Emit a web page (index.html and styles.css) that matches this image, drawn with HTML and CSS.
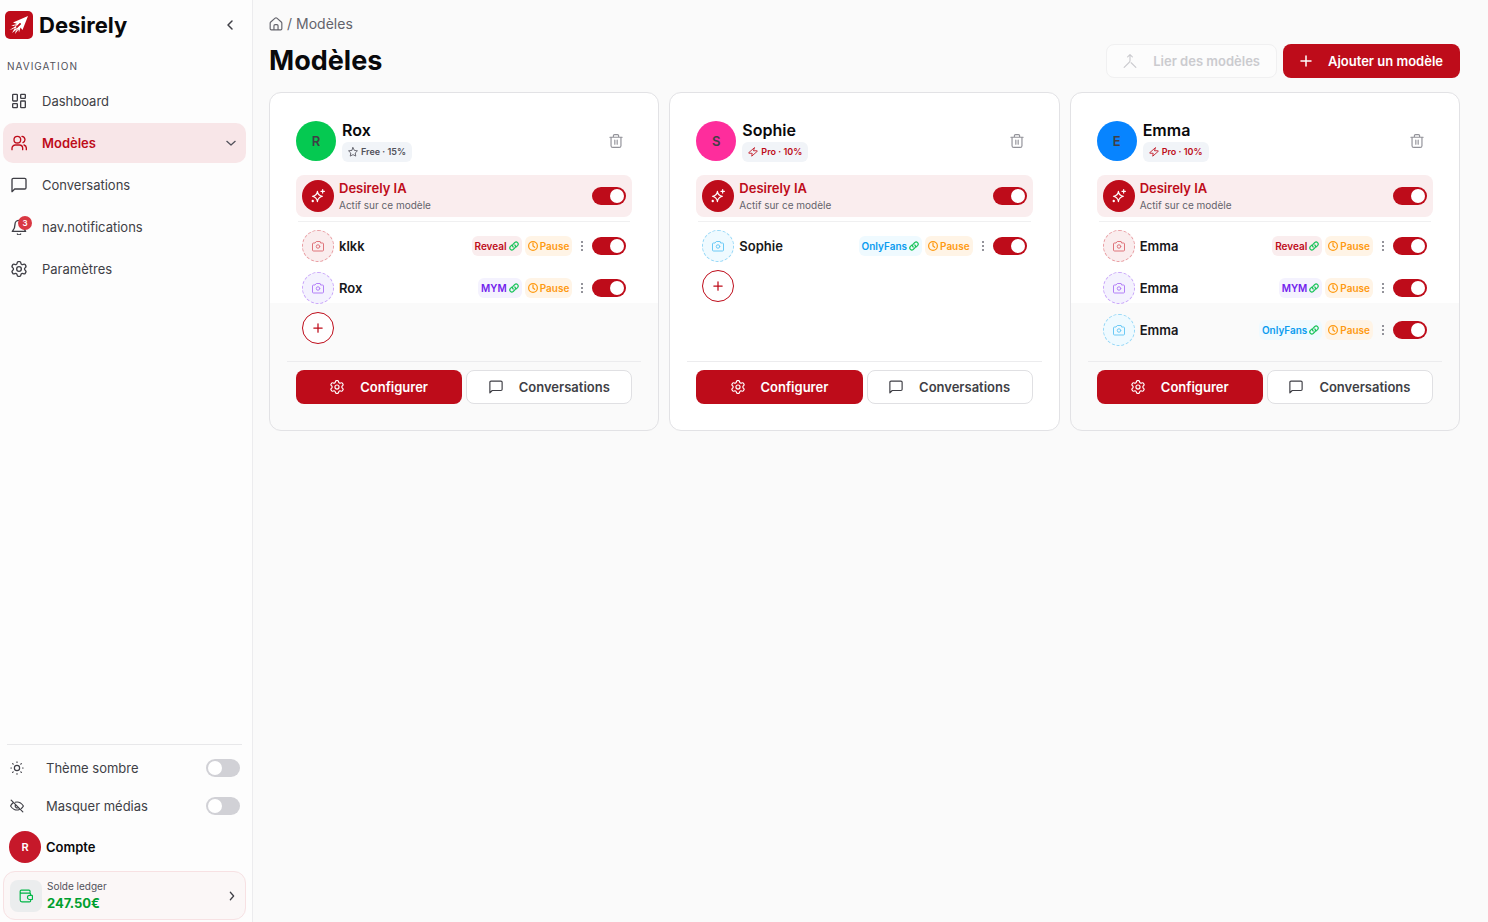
FILE: index.html
```html
<!DOCTYPE html>
<html lang="fr">
<head>
  <meta charset="utf-8">
  <title>Desirely</title>
  <link rel="stylesheet" href="styles.css">
</head>
<body>
  <svg class="sprite" aria-hidden="true">
    <symbol id="i-dashboard" viewBox="0 0 24 24"><rect x="2.500" y="2" width="7" height="10" rx="1"/><rect x="14.500" y="2" width="7" height="6" rx="1"/><rect x="14.500" y="12" width="7" height="10" rx="1"/><rect x="2.500" y="16" width="7" height="6" rx="1"/></symbol>
    <symbol id="i-users" viewBox="0 0 24 24"><circle cx="9.500" cy="7" r="5"/><path d="M1.500 22v-2a5 5 0 0 1 5-5h6a5 5 0 0 1 5 5v2M16.500 2a5 5 0 0 1 1.500 9.500M19.500 15a5 5 0 0 1 3.500 5v2"/></symbol>
    <symbol id="i-chat" viewBox="0 0 24 24"><path d="M1.500 22V4a2 2 0 0 1 2-2h17a2 2 0 0 1 2 2v12a2 2 0 0 1-2 2H5.500z"/></symbol>
    <symbol id="i-bell" viewBox="0 0 24 24"><path d="M18 8A6 6 0 0 0 6 8c0 7-3 9-4 10.500h20C21 17 18 15 18 8M9.500 22.500a3 3 0 0 0 5 0"/></symbol>
    <symbol id="i-gear" viewBox="0 0 24 24"><path d="M9.200 3.200c.1-1.400.7-2.200 1.700-2.200h2.200c1 0 1.600.8 1.700 2.200.1.900.6 1.500 1.300 1.900s1.500.3 2.300 0c1.400-.6 2.400-.5 2.900.4l1 1.800c.5.900.1 1.800-1 2.700-.8.600-1 1.200-1 2s.2 1.400 1 2c1.100.9 1.500 1.800 1 2.700l-1 1.800c-.5.900-1.500 1-2.900.4-.8-.3-1.600-.4-2.300 0s-1.200 1-1.300 1.900c-.1 1.400-.7 2.200-1.700 2.200h-2.200c-1 0-1.600-.8-1.700-2.200-.1-.9-.6-1.500-1.300-1.900s-1.500-.3-2.300 0c-1.400.6-2.400.5-2.900-.4l-1-1.800c-.5-.9-.1-1.800 1-2.700.8-.6 1-1.200 1-2s-.2-1.400-1-2c-1.100-.9-1.500-1.800-1-2.700l1-1.800c.5-.9 1.500-1 2.900-.4.8.3 1.600.4 2.300 0s1.200-1 1.300-1.900z"/><circle cx="12" cy="12" r="3.500"/></symbol>
    <symbol id="i-down" viewBox="0 0 24 24"><path d="m2 8 10 9 10-9"/></symbol>
    <symbol id="i-left" viewBox="0 0 24 24"><path d="m16 4-8 8 8 8"/></symbol>
    <symbol id="i-right" viewBox="0 0 24 24"><path d="m8 3 8 9-8 9"/></symbol>
    <symbol id="i-sun" viewBox="0 0 24 24"><circle cx="12" cy="12" r="4.500"/><path d="M12 1.500v1M12 21.500v1M1.500 12h1M21.500 12h1M4.500 4.500l1 1M18.500 18.500l1 1M4.500 19.500l1-1M18.500 5.500l1-1"/></symbol>
    <symbol id="i-hide" viewBox="0 0 24 24"><path d="M2 2l20 20M9 5.500c6-1.500 11 2 14 6.500-1 1.800-2.200 3.200-3.500 4.200M5 7c-1.600 1.200-3 3-4 5 3 5 9 8.500 15 6M9.500 10a3.500 3.500 0 0 0 4.800 4.800"/></symbol>
    <symbol id="i-wallet" viewBox="0 0 24 24"><path d="M19 6V4a2 2 0 0 0-2-2H4a2 2 0 0 0-2 2v15a3 3 0 0 0 3 3h13a2 2 0 0 0 2-2v-2M2 4.500A2.500 2.500 0 0 0 4.500 7H18a2 2 0 0 1 2 2v2M22 11h-4a3.500 3.500 0 0 0 0 7h4a1 1 0 0 0 1-1v-5a1 1 0 0 0-1-1z"/></symbol>
    <symbol id="i-home" viewBox="0 0 24 24"><path d="M2 10.500C2 9.500 2.500 9 3 8.500l7.500-6.500c1-.8 2-.8 3 0L21 8.500c.5.500 1 1 1 2V20a2 2 0 0 1-2 2H4a2 2 0 0 1-2-2zM8.500 22v-7a2 2 0 0 1 2-2h3a2 2 0 0 1 2 2v7"/></symbol>
    <symbol id="i-merge" viewBox="0 0 24 24"><path d="M8 5l4-4 4 4M12 1v10c0 2-1 3-2 4l-8 8M14 15l8 8"/></symbol>
    <symbol id="i-plus" viewBox="0 0 24 24"><path d="M12 2v20M2 12h20"/></symbol>
    <symbol id="i-star" viewBox="0 0 24 24"><path d="m12 1.500 3.300 6.700 7.400 1-5.400 5.200 1.300 7.400-6.600-3.500-6.600 3.500 1.300-7.400L1.300 9.200l7.400-1z"/></symbol>
    <symbol id="i-zap" viewBox="0 0 24 24"><path d="M15 2 2 13.500c-.8.700-.4 1.500.5 1.500H10l-1 7L22 10.500c.8-.7.4-1.500-.5-1.500H14z"/></symbol>
    <symbol id="i-trash" viewBox="0 0 24 24"><path d="M1.500 5.500h21M7.500 5V3a2 2 0 0 1 2-2h5a2 2 0 0 1 2 2v2M3.500 5.500V20a3 3 0 0 0 3 3h11a3 3 0 0 0 3-3V5.500M10 10.500v7M14 10.500v7"/></symbol>
    <symbol id="i-spark" viewBox="0 0 24 24"><path d="M11 4c.8 5.500 3 7.500 8.500 8.500-5.500 1.500-7.700 3.500-8.500 9-.8-5.500-3-7.500-8.500-9C8 11.500 10.200 9.500 11 4zM20 1v6M17 4h6"/><circle cx="3" cy="20.500" r="1"/></symbol>
    <symbol id="i-camera" viewBox="0 0 24 24"><path d="M15.500 3h-7L6 6H3a2 2 0 0 0-2 2v12a2 2 0 0 0 2 2h18a2 2 0 0 0 2-2V8a2 2 0 0 0-2-2h-3z"/><circle cx="12" cy="13" r="3.500"/></symbol>
    <symbol id="i-link" viewBox="0 0 24 24"><path d="M10 14.500a5 5 0 0 1 0-7l4-4a5 5 0 0 1 7 7L17.500 14M14 9.500a5 5 0 0 1 0 7l-4 4a5 5 0 0 1-7-7L6.500 10"/></symbol>
    <symbol id="i-clock" viewBox="0 0 24 24"><circle cx="12" cy="12" r="10.500"/><path d="M12 5v7l4 3"/></symbol>
    <symbol id="i-dots" viewBox="0 0 4 14"><circle cx="2" cy="3" r="1"/><circle cx="2" cy="7" r="1"/><circle cx="2" cy="11" r="1"/></symbol>
  </svg>

  <div class="app">
    <aside class="sidebar">
      <div class="brand">
        <svg class="brand-mark" viewBox="0 0 28 28" aria-hidden="true">
          <rect width="28" height="28" rx="5" fill="#be0c1a"/>
          <path d="M23 5 8 11.500l4 1.500-6 1.500 4.500.7L4.500 19l5-1.500L7 22l4-3-1 4 3.500-4.500.5 3 1.500-5 2 2.500z" fill="#fff"/>
          <path d="m15 12-4 4 1 1 4-4zM9 14.500l3 .5M8 18l4-1M10.500 20l2-2" fill="#be0c1a" stroke="#be0c1a" stroke-width=".5"/>
        </svg>
        <span class="brand-name">Desirely</span>
        <button class="collapse" aria-label="Réduire"><svg class="icon icon-12"><use href="#i-left"/></svg></button>
      </div>

      <div class="nav-title">NAVIGATION</div>
      <nav class="nav">
        <a href="#"><svg class="icon"><use href="#i-dashboard"/></svg>Dashboard</a>
        <a href="#" class="active"><svg class="icon"><use href="#i-users"/></svg>Modèles<svg class="icon icon-10 nav-arrow"><use href="#i-down"/></svg></a>
        <a href="#"><svg class="icon"><use href="#i-chat"/></svg>Conversations</a>
        <a href="#"><span class="bell"><svg class="icon"><use href="#i-bell"/></svg><span class="count">3</span></span>nav.notifications</a>
        <a href="#"><svg class="icon"><use href="#i-gear"/></svg>Paramètres</a>
      </nav>

      <div class="sidebar-bottom">
        <label class="setting"><svg class="icon icon-14"><use href="#i-sun"/></svg><span>Thème sombre</span><input type="checkbox" class="switch"></label>
        <label class="setting"><svg class="icon icon-14"><use href="#i-hide"/></svg><span>Masquer médias</span><input type="checkbox" class="switch"></label>
        <div class="account"><span class="account-avatar">R</span>Compte</div>
        <a href="#" class="ledger">
          <span class="ledger-icon"><svg class="icon icon-14"><use href="#i-wallet"/></svg></span>
          <span class="ledger-text"><span>Solde ledger</span><strong>247.50€</strong></span>
          <svg class="icon icon-10"><use href="#i-right"/></svg>
        </a>
      </div>
    </aside>

    <main class="main">
      <div class="breadcrumb"><a href="#" aria-label="Accueil"><svg class="icon icon-14"><use href="#i-home"/></svg></a><span>/</span><span>Modèles</span></div>
      <div class="page-head">
        <h1>Modèles</h1>
        <button class="btn btn-disabled" disabled><svg class="icon icon-14"><use href="#i-merge"/></svg>Lier des modèles</button>
        <button class="btn btn-red"><svg class="icon icon-12"><use href="#i-plus"/></svg>Ajouter un modèle</button>
      </div>

      <div class="cards">
        <section class="card card-shaded">
          <div class="card-head">
            <span class="avatar green">R</span>
            <div class="who">
              <h2>Rox</h2>
              <span class="plan"><svg class="icon icon-10"><use href="#i-star"/></svg>Free · 15%</span>
            </div>
            <button class="trash" aria-label="Supprimer"><svg class="icon icon-14"><use href="#i-trash"/></svg></button>
          </div>
          <div class="ai">
            <span class="ai-icon"><svg class="icon icon-14"><use href="#i-spark"/></svg></span>
            <div class="ai-text"><strong>Desirely IA</strong><span>Actif sur ce modèle</span></div>
            <input type="checkbox" class="switch" aria-label="Desirely IA" checked>
          </div>
          <div class="profiles">
            <div class="profile">
              <span class="photo reveal"><svg class="icon icon-12"><use href="#i-camera"/></svg></span>
              <span class="profile-name">klkk</span>
              <span class="tag reveal">Reveal<svg class="icon icon-10"><use href="#i-link"/></svg></span>
              <button class="tag pause"><svg class="icon icon-10"><use href="#i-clock"/></svg>Pause</button>
              <button class="more" aria-label="Options"><svg><use href="#i-dots"/></svg></button>
              <input type="checkbox" class="switch" aria-label="klkk" checked>
            </div>
            <div class="profile">
              <span class="photo mym"><svg class="icon icon-12"><use href="#i-camera"/></svg></span>
              <span class="profile-name">Rox</span>
              <span class="tag mym">MYM<svg class="icon icon-10"><use href="#i-link"/></svg></span>
              <button class="tag pause"><svg class="icon icon-10"><use href="#i-clock"/></svg>Pause</button>
              <button class="more" aria-label="Options"><svg><use href="#i-dots"/></svg></button>
              <input type="checkbox" class="switch" aria-label="Rox" checked>
            </div>
            <button class="add" aria-label="Ajouter"><svg class="icon icon-10"><use href="#i-plus"/></svg></button>
          </div>
          <div class="card-foot">
            <button class="btn btn-red"><svg class="icon icon-14"><use href="#i-gear"/></svg>Configurer</button>
            <button class="btn btn-white"><svg class="icon icon-14"><use href="#i-chat"/></svg>Conversations</button>
          </div>
        </section>

        <section class="card">
          <div class="card-head">
            <span class="avatar pink">S</span>
            <div class="who">
              <h2>Sophie</h2>
              <span class="plan pro"><svg class="icon icon-10"><use href="#i-zap"/></svg>Pro · 10%</span>
            </div>
            <button class="trash" aria-label="Supprimer"><svg class="icon icon-14"><use href="#i-trash"/></svg></button>
          </div>
          <div class="ai">
            <span class="ai-icon"><svg class="icon icon-14"><use href="#i-spark"/></svg></span>
            <div class="ai-text"><strong>Desirely IA</strong><span>Actif sur ce modèle</span></div>
            <input type="checkbox" class="switch" aria-label="Desirely IA" checked>
          </div>
          <div class="profiles">
            <div class="profile">
              <span class="photo onlyfans"><svg class="icon icon-12"><use href="#i-camera"/></svg></span>
              <span class="profile-name">Sophie</span>
              <span class="tag onlyfans">OnlyFans<svg class="icon icon-10"><use href="#i-link"/></svg></span>
              <button class="tag pause"><svg class="icon icon-10"><use href="#i-clock"/></svg>Pause</button>
              <button class="more" aria-label="Options"><svg><use href="#i-dots"/></svg></button>
              <input type="checkbox" class="switch" aria-label="Sophie" checked>
            </div>
            <button class="add" aria-label="Ajouter"><svg class="icon icon-10"><use href="#i-plus"/></svg></button>
          </div>
          <div class="card-foot">
            <button class="btn btn-red"><svg class="icon icon-14"><use href="#i-gear"/></svg>Configurer</button>
            <button class="btn btn-white"><svg class="icon icon-14"><use href="#i-chat"/></svg>Conversations</button>
          </div>
        </section>

        <section class="card card-shaded">
          <div class="card-head">
            <span class="avatar blue">E</span>
            <div class="who">
              <h2>Emma</h2>
              <span class="plan pro"><svg class="icon icon-10"><use href="#i-zap"/></svg>Pro · 10%</span>
            </div>
            <button class="trash" aria-label="Supprimer"><svg class="icon icon-14"><use href="#i-trash"/></svg></button>
          </div>
          <div class="ai">
            <span class="ai-icon"><svg class="icon icon-14"><use href="#i-spark"/></svg></span>
            <div class="ai-text"><strong>Desirely IA</strong><span>Actif sur ce modèle</span></div>
            <input type="checkbox" class="switch" aria-label="Desirely IA" checked>
          </div>
          <div class="profiles">
            <div class="profile">
              <span class="photo reveal"><svg class="icon icon-12"><use href="#i-camera"/></svg></span>
              <span class="profile-name">Emma</span>
              <span class="tag reveal">Reveal<svg class="icon icon-10"><use href="#i-link"/></svg></span>
              <button class="tag pause"><svg class="icon icon-10"><use href="#i-clock"/></svg>Pause</button>
              <button class="more" aria-label="Options"><svg><use href="#i-dots"/></svg></button>
              <input type="checkbox" class="switch" aria-label="Emma Reveal" checked>
            </div>
            <div class="profile">
              <span class="photo mym"><svg class="icon icon-12"><use href="#i-camera"/></svg></span>
              <span class="profile-name">Emma</span>
              <span class="tag mym">MYM<svg class="icon icon-10"><use href="#i-link"/></svg></span>
              <button class="tag pause"><svg class="icon icon-10"><use href="#i-clock"/></svg>Pause</button>
              <button class="more" aria-label="Options"><svg><use href="#i-dots"/></svg></button>
              <input type="checkbox" class="switch" aria-label="Emma MYM" checked>
            </div>
            <div class="profile">
              <span class="photo onlyfans"><svg class="icon icon-12"><use href="#i-camera"/></svg></span>
              <span class="profile-name">Emma</span>
              <span class="tag onlyfans">OnlyFans<svg class="icon icon-10"><use href="#i-link"/></svg></span>
              <button class="tag pause"><svg class="icon icon-10"><use href="#i-clock"/></svg>Pause</button>
              <button class="more" aria-label="Options"><svg><use href="#i-dots"/></svg></button>
              <input type="checkbox" class="switch" aria-label="Emma OnlyFans" checked>
            </div>
          </div>
          <div class="card-foot">
            <button class="btn btn-red"><svg class="icon icon-14"><use href="#i-gear"/></svg>Configurer</button>
            <button class="btn btn-white"><svg class="icon icon-14"><use href="#i-chat"/></svg>Conversations</button>
          </div>
        </section>
      </div>
    </main>
  </div>
</body>
</html>
```
FILE: styles.css
```css
* {
  box-sizing: border-box;
}

body {
  margin: 0;
  font-family: Inter, "Liberation Sans", sans-serif;
  font-size: 13px;
  line-height: 16px;
  color: #3f3f46;
  background: #fafafa;
}

a {
  color: inherit;
  text-decoration: none;
}

button {
  font-family: inherit;
  padding: 0;
  border: none;
  background: none;
  cursor: pointer;
}

h1, h2 {
  margin: 0;
  color: #09090b;
}

/* icons */
.sprite {
  display: none;
}

.icon {
  display: block;
  flex: none;
  width: 16px;
  height: 16px;
  fill: none;
  stroke: currentColor;
  stroke-width: 2;
  stroke-linecap: round;
  stroke-linejoin: round;
}

.icon-14 {
  width: 14px;
  height: 14px;
}

.icon-12 {
  width: 12px;
  height: 12px;
}

.icon-10 {
  width: 10px;
  height: 10px;
  stroke-width: 3;
}

.app {
  display: flex;
  min-height: 100vh;
}

/* sidebar */
.sidebar {
  display: flex;
  flex-direction: column;
  flex: none;
  width: 253px;
  padding: 8px 6px 2px 3px;
  background: #fdfdfd;
  border-right: 1px solid #ececee;
}

.brand {
  display: flex;
  align-items: center;
  gap: 6px;
  height: 34px;
  padding: 0 10px 0 2px;
}

.brand-mark {
  width: 28px;
  height: 28px;
}

.brand-name {
  font-size: 22px;
  line-height: 32px;
  font-weight: 700;
  color: #09090b;
}

.collapse {
  margin-left: auto;
  color: #3f3f46;
}

.collapse .icon,
.btn-red .icon-12 {
  stroke-width: 3;
}

.nav-title {
  padding: 16px 4px 0;
  font-size: 10px;
  color: #52525b;
  letter-spacing: 1px;
}

.nav {
  display: flex;
  flex-direction: column;
  gap: 2px;
  margin-top: 7px;
}

.nav a {
  display: flex;
  align-items: center;
  gap: 15px;
  height: 40px;
  padding: 0 10px 0 8px;
  border-radius: 10px;
}

.nav a.active {
  color: #be0c1a;
  font-weight: 600;
  background: #f8e6e8;
}

.nav-arrow {
  margin-left: auto;
  color: #52525b;
}

.bell {
  position: relative;
}

.count {
  position: absolute;
  top: -3px;
  right: -5px;
  width: 14px;
  height: 14px;
  border-radius: 50%;
  background: #d93843;
  color: #fff;
  font-size: 8px;
  line-height: 14px;
  font-weight: 600;
  text-align: center;
}

.sidebar-bottom {
  margin-top: auto;
}

.sidebar-bottom::before {
  content: "";
  display: block;
  height: 1px;
  margin: 0 4px 4px;
  background: #e8e8ea;
}

.setting {
  display: flex;
  align-items: center;
  height: 38px;
  padding: 0 6px 0 7px;
}

.setting span {
  flex: 1;
  padding-left: 22px;
}

.account {
  display: flex;
  align-items: center;
  gap: 5px;
  height: 44px;
  padding-left: 6px;
  color: #09090b;
  font-weight: 600;
}

.account-avatar {
  width: 32px;
  height: 32px;
  border-radius: 50%;
  background: #c6182a;
  color: #fff;
  font-size: 11px;
  line-height: 32px;
  text-align: center;
}

.ledger {
  display: flex;
  align-items: center;
  gap: 5px;
  height: 49px;
  margin-top: 2px;
  padding: 0 8px 0 6px;
  background: #fbf7f7;
  border: 1px solid #f7e1e3;
  border-radius: 12px;
}

.ledger-icon {
  display: flex;
  align-items: center;
  justify-content: center;
  width: 32px;
  height: 32px;
  border-radius: 8px;
  background: #ebedee;
  color: #00b646;
}

.ledger-text {
  display: flex;
  flex: 1;
  flex-direction: column;
  padding-bottom: 2px;
  font-size: 10px;
  color: #52525b;
}

.ledger-text strong {
  font-size: 13px;
  line-height: 18px;
  color: #00a02f;
}

/* switches */
.switch {
  appearance: none;
  flex: none;
  width: 34px;
  height: 18px;
  margin: 0;
  padding: 2px;
  border-radius: 9px;
  background: #d1d1d6;
  cursor: pointer;
}

.switch::before {
  content: "";
  display: block;
  width: 14px;
  height: 14px;
  border-radius: 50%;
  background: #fff;
}

.switch:checked {
  background: #be0c1a;
}

.switch:checked::before {
  margin-left: auto;
}

/* main */
.main {
  flex: 1;
  min-width: 0;
  padding: 16px 28px 16px 16px;
}

.breadcrumb {
  display: flex;
  align-items: center;
  gap: 4px;
  font-size: 14px;
  color: #63636b;
}

.page-head {
  display: flex;
  align-items: center;
  gap: 6px;
  margin: 12px 0 14px;
}

.page-head h1 {
  flex: 1;
  font-size: 27px;
  line-height: 34px;
}

.btn {
  display: flex;
  align-items: center;
  justify-content: center;
  gap: 16px;
  height: 34px;
  padding: 0 16px;
  border: 1px solid transparent;
  border-radius: 8px;
  font-size: 13px;
  font-weight: 600;
}

.btn-red {
  background: #be0c1a;
  color: #fff;
}

.btn-white {
  background: #fff;
  border-color: #e0e0e3;
  color: #3f3f46;
}

.btn-disabled {
  background: #fcfcfc;
  border-color: #f0f0f1;
  color: #cbcbcf;
}

.cards {
  display: grid;
  grid-template-columns: repeat(3, 1fr);
  gap: 10px;
}

.card {
  display: flex;
  flex-direction: column;
  padding: 27px 26px 26px;
  background: #fff;
  border: 1px solid #e2e2e5;
  border-radius: 12px;
}

.card-shaded {
  background: linear-gradient(#fff 210px, #fafafa 210px);
}

.card-head {
  display: flex;
  align-items: center;
  gap: 6px;
  height: 42px;
}

.avatar {
  width: 40px;
  height: 40px;
  border-radius: 50%;
  color: #3f3f46;
  font-weight: 600;
  line-height: 40px;
  text-align: center;
}

.avatar.green {
  background: #05c951;
}

.avatar.pink {
  background: #fe2d9c;
}

.avatar.blue {
  background: #0784ff;
}

.who {
  flex: 1;
}

.who h2 {
  font-size: 16px;
  line-height: 20px;
  font-weight: 600;
}

.plan {
  display: inline-flex;
  align-items: center;
  gap: 3px;
  height: 20px;
  padding: 0 6px;
  margin-top: 2px;
  border-radius: 6px;
  background: #f1f4f8;
  color: #52525b;
  font-size: 9px;
  font-weight: 600;
}

.plan .icon {
  stroke-width: 2;
}

.plan.pro {
  color: #be0c1a;
}

.trash {
  margin-right: 9px;
  color: #929299;
}

.ai {
  display: flex;
  align-items: center;
  height: 42px;
  margin-top: 13px;
  padding: 0 6px;
  border-radius: 8px;
  background: #faedee;
}

.ai-icon {
  display: flex;
  align-items: center;
  justify-content: center;
  width: 32px;
  height: 32px;
  border-radius: 50%;
  background: #be0c1a;
  color: #fff;
}

.ai-text {
  display: flex;
  flex: 1;
  flex-direction: column;
  padding-left: 5px;
  font-size: 10px;
  color: #63636b;
}

.ai-text strong {
  font-size: 13px;
  line-height: 18px;
  font-weight: 600;
  color: #be0c1a;
}

.profiles {
  flex: 1;
  margin-top: 4px;
  padding-bottom: 10px;
}

.profiles::before {
  content: "";
  display: block;
  height: 1px;
  margin: 0 2px 3px;
  background: #f0f0f1;
}

.profile {
  display: flex;
  align-items: center;
  height: 42px;
  padding: 0 6px;
}

.photo {
  display: flex;
  align-items: center;
  justify-content: center;
  width: 32px;
  height: 32px;
  border: 1px dashed;
  border-radius: 50%;
}

.photo.reveal {
  background: #faedee;
  border-color: #e99da2;
  color: #df747b;
}

.photo.mym {
  background: #f4f2fe;
  border-color: #c9a5fa;
  color: #b380f7;
}

.photo.onlyfans {
  background: #effaff;
  border-color: #96d8f7;
  color: #6ccaf6;
}

.profile-name {
  flex: 1;
  padding-left: 5px;
  color: #18181b;
  font-weight: 600;
}

.tag {
  display: flex;
  align-items: center;
  gap: 2px;
  height: 20px;
  margin-right: 3px;
  padding: 0 3px;
  border-radius: 6px;
  font-size: 10px;
  font-weight: 600;
}

.tag.reveal {
  background: #faedee;
  color: #be0c1a;
}

.tag.mym {
  background: #f4f2fe;
  color: #7222ed;
}

.tag.onlyfans {
  background: #effaff;
  color: #0b9cef;
}

.tag:not(.pause) .icon {
  color: #1bc45c;
}

.tag.pause {
  margin-right: 0;
  background: #fff4e6;
  color: #fe9a12;
}

.more {
  width: 20px;
  height: 20px;
}

.more svg {
  display: block;
  width: 4px;
  height: 14px;
  margin: 0 auto;
  fill: #71717a;
}

.add {
  display: flex;
  align-items: center;
  justify-content: center;
  width: 32px;
  height: 32px;
  margin: 3px 0 7px 6px;
  border: 1px solid #be0c1a;
  border-radius: 50%;
  background: #fff;
  color: #be0c1a;
}

.card-foot {
  display: flex;
  gap: 4px;
  margin: 0 -9px;
  padding: 8px 9px 0;
  border-top: 1px solid #ececee;
}

.card-foot .btn {
  flex: 1;
}
```
